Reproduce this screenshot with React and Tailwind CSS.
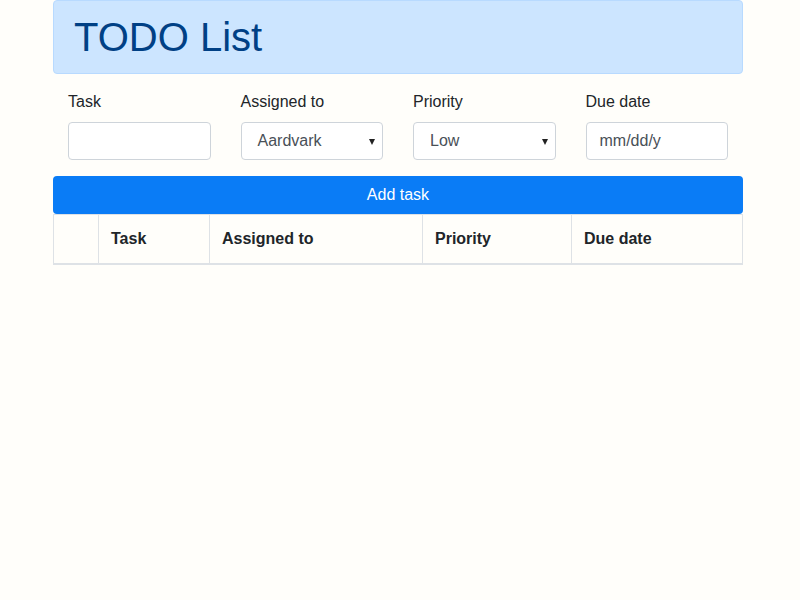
import React from "react";

function Caret() {
  return (
    <svg className="absolute right-[7px] top-[16px]" width="6" height="6" viewBox="0 0 6 6">
      <path d="M0 0 L6 0 L3 6 Z" fill="#222" />
    </svg>
  );
}

export default function App() {
  return (
    <div className="min-h-[600px] w-full bg-[#fffefa] text-[#212529] text-base" style={{ fontFamily: '"Liberation Sans", Arial, sans-serif' }}>
      <div className="ml-[53px] w-[690px]">
        <div className="h-[74px] rounded border border-[#b8daff] bg-[#cce5ff] px-5 py-3 mb-4">
          <h1 className="text-[40px] leading-[48px] font-medium text-[#004085]">TODO List</h1>
        </div>
        <div className="grid grid-cols-4">
          <div className="px-[15px] mb-4">
            <label className="block leading-6 mb-2">Task</label>
            <div className="h-[38px] rounded border border-[#ced4da] bg-white"></div>
          </div>
          <div className="px-[15px] mb-4">
            <label className="block leading-6 mb-2">Assigned to</label>
            <div className="relative h-[38px] rounded border border-[#ced4da] bg-white pl-4 leading-[36px] text-[#495057]">
              Aardvark
              <Caret />
            </div>
          </div>
          <div className="px-[15px] mb-4">
            <label className="block leading-6 mb-2">Priority</label>
            <div className="relative h-[38px] rounded border border-[#ced4da] bg-white pl-4 leading-[36px] text-[#495057]">
              Low
              <Caret />
            </div>
          </div>
          <div className="px-[15px] mb-4">
            <label className="block leading-6 mb-2">Due date</label>
            <div className="h-[38px] rounded border border-[#ced4da] bg-white pl-[13px] leading-[36px] text-[#495057] overflow-hidden whitespace-nowrap">
              mm/dd/y
            </div>
          </div>
        </div>
        <button className="block w-full h-[38px] rounded bg-[#0a7cf6] text-white leading-6">Add task</button>
        <table className="w-full table-fixed border-collapse">
          <colgroup>
            <col className="w-[45px]" />
            <col className="w-[111px]" />
            <col className="w-[213px]" />
            <col className="w-[149px]" />
            <col />
          </colgroup>
          <thead>
            <tr>
              <th className="border border-[#dee2e6] border-b-2 p-3 text-left font-bold leading-6"></th>
              <th className="border border-[#dee2e6] border-b-2 p-3 text-left font-bold leading-6">Task</th>
              <th className="border border-[#dee2e6] border-b-2 p-3 text-left font-bold leading-6">Assigned to</th>
              <th className="border border-[#dee2e6] border-b-2 p-3 text-left font-bold leading-6">Priority</th>
              <th className="border border-[#dee2e6] border-b-2 p-3 text-left font-bold leading-6">Due date</th>
            </tr>
          </thead>
        </table>
      </div>
    </div>
  );
}
